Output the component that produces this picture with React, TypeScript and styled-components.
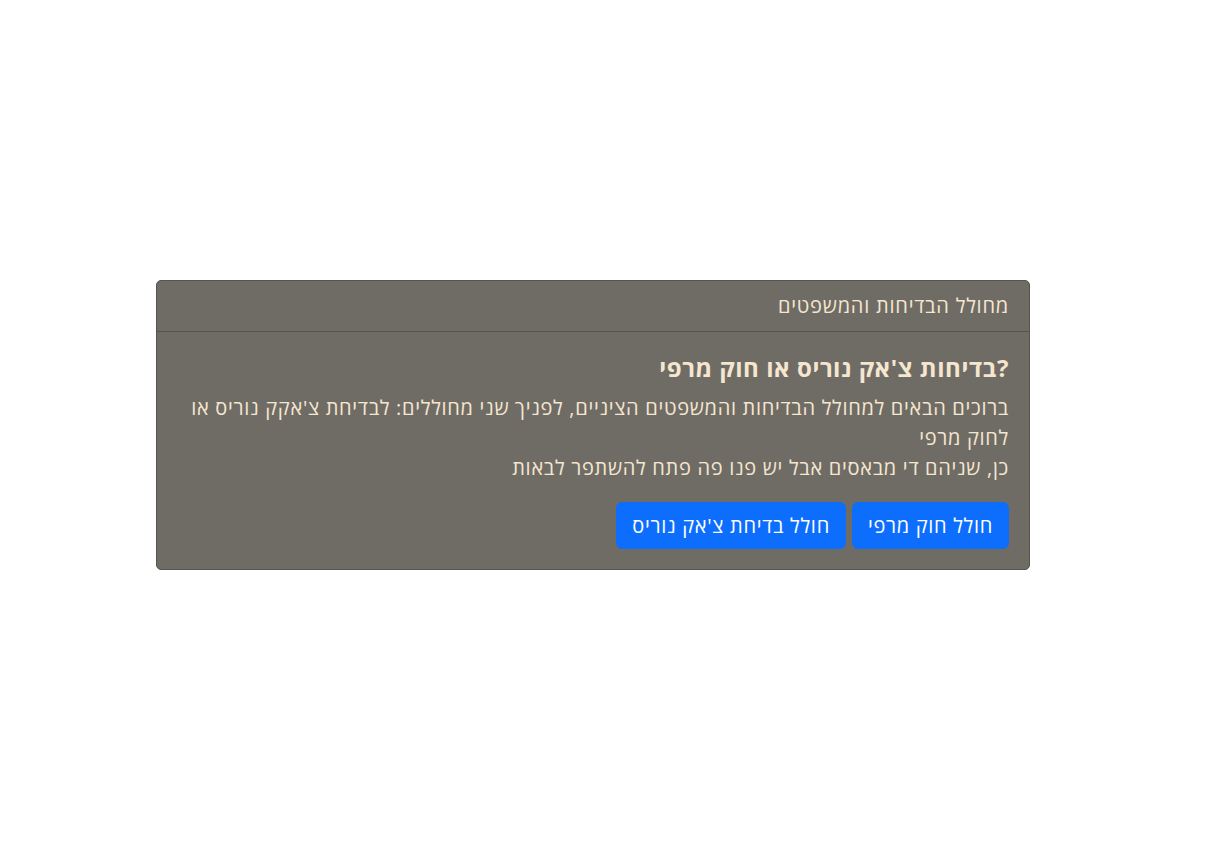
import React from 'react';
import styled, { createGlobalStyle } from 'styled-components';

const GlobalStyle = createGlobalStyle`
  html {
    font-size: 20px;
  }
  body {
    margin: 0;
    background: #fff;
    font-family: "Open Sans", "Liberation Sans", "DejaVu Sans", sans-serif;
  }
  * {
    box-sizing: border-box;
  }
`;

const Page = styled.div`
  min-height: 854px;
  display: flex;
  align-items: center;
  padding: 0 0 4px 156px;
`;

const Card = styled.div`
  direction: rtl;
  width: 874px;
  background: #6f6c66;
  color: #f5e6d0;
  border: 1px solid #56544f;
  border-radius: 5px;
  overflow: hidden;
`;

const CardHeader = styled.div`
  padding: 10px 20px;
  line-height: 30px;
  font-size: 20px;
  letter-spacing: 0.78px;
  border-bottom: 1px solid #56544f;
`;

const CardBody = styled.div`
  padding: 21px 20px 20px;
`;

const CardTitle = styled.h5`
  margin: 0 0 11px;
  font-size: 24px;
  font-weight: 700;
  line-height: 29px;
  letter-spacing: 0.55px;
`;

const CardText = styled.p`
  margin: 0 0 19px;
  font-size: 20px;
  line-height: 30px;
  letter-spacing: 0.7px;
`;

const Actions = styled.div`
  display: flex;
  gap: 6px;
`;

const Button = styled.button`
  font-family: inherit;
  font-size: 20px;
  line-height: 30px;
  letter-spacing: 0.7px;
  padding: 7.5px 15px;
  color: #fff;
  background: #0d6efd;
  border: 1px solid #0d6efd;
  border-radius: 6px;
  cursor: pointer;
`;

export default function App(): JSX.Element {
  return (
    <>
      <GlobalStyle />
      <Page>
        <Card>
          <CardHeader>מחולל הבדיחות והמשפטים</CardHeader>
          <CardBody>
            <CardTitle>?בדיחות צ'אק נוריס או חוק מרפי</CardTitle>
            <CardText>
              ברוכים הבאים למחולל הבדיחות והמשפטים הציניים, לפניך שני מחוללים: לבדיחת צ'אקק נוריס או לחוק מרפי
              <br />
              כן, שניהם די מבאסים אבל יש פנו פה פתח להשתפר לבאות
            </CardText>
            <Actions>
              <Button>חולל חוק מרפי</Button>
              <Button>חולל בדיחת צ'אק נוריס</Button>
            </Actions>
          </CardBody>
        </Card>
      </Page>
    </>
  );
}
